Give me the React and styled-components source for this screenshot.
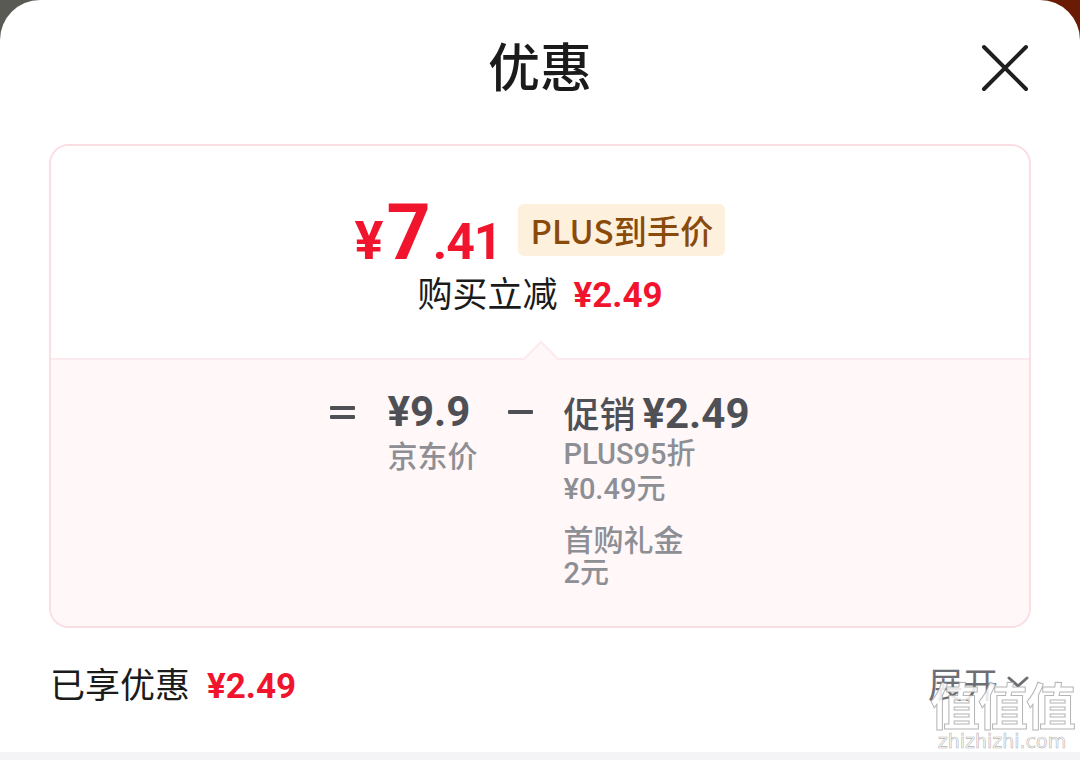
import React from "react";
import styled, { createGlobalStyle } from "styled-components";

const GlobalStyle = createGlobalStyle`
  html, body {
    margin: 0;
    padding: 0;
    height: 100%;
  }
  body {
    background: linear-gradient(90deg, #5a5a55 0%, #5a5a55 50%, #6a1b05 50%, #6a1b05 100%);
    font-family: "Noto Sans CJK SC", "Noto Sans", sans-serif;
  }
`;

const cjk = `"Noto Sans CJK SC", "Noto Sans", sans-serif`;
const num = `Roboto, "Noto Sans CJK SC", sans-serif`;

const Sheet = styled.div`
  position: relative;
  width: 1080px;
  height: 760px;
  background: #fff;
  border-radius: 40px 40px 0 0;
  display: flex;
  flex-direction: column;
  overflow: hidden;
`;

const Header = styled.div`
  height: 144px;
  display: grid;
  grid-template-columns: 1fr auto 1fr;
  align-items: start;
`;

const Title = styled.h1`
  grid-column: 2;
  margin: 30px 0 0;
  font-family: ${cjk};
  font-size: 52px;
  font-weight: 500;
  line-height: 70px;
  color: #1b1b1b;
`;

const CloseButton = styled.button`
  grid-column: 3;
  justify-self: end;
  margin: 44px 51px 0 0;
  width: 48px;
  height: 48px;
  padding: 0;
  border: none;
  background: none;
  cursor: pointer;
`;

const Card = styled.div`
  margin: 0 49px;
  height: 484px;
  box-sizing: border-box;
  border: 2px solid #fbdde4;
  border-radius: 20px;
  overflow: hidden;
  display: flex;
  flex-direction: column;
`;

const CardTop = styled.div`
  height: 212px;
  flex-shrink: 0;
  display: flex;
  flex-direction: column;
  align-items: center;
  background: #fff;
`;

const PriceRow = styled.div`
  display: flex;
  align-items: center;
  gap: 16px;
  margin-top: 52px;
  height: 64px;
`;

const BigPrice = styled.div`
  display: flex;
  align-items: baseline;
  color: #f0142d;
  font-family: ${num};
  font-weight: 700;
  line-height: 1;
  transform: translateY(3px);
`;

const Part = styled.span`
  font-size: ${(p) => p.$size}px;
  letter-spacing: ${(p) => p.$track || 0}px;
  margin-right: ${(p) => p.$after || 0}px;
`;

const Badge = styled.span`
  display: inline-flex;
  align-items: center;
  height: 52px;
  padding: 0 12px 0 13px;
  border-radius: 6px;
  background: #fdf0dd;
  color: #8a4a0a;
  font-family: ${cjk};
  font-size: 33px;
  font-weight: 500;
  letter-spacing: 0.2px;
`;

const SubLine = styled.div`
  margin-top: 8px;
  display: flex;
  align-items: baseline;
  gap: 16px;
  font-family: ${cjk};
  font-size: 35px;
  color: #1b1b1b;
  line-height: 44px;
`;

const Red = styled.span`
  color: #f0142d;
  font-family: ${num};
  font-weight: 700;
  font-size: ${(p) => p.$size || 32}px;
`;

const CardBottom = styled.div`
  position: relative;
  flex: 1;
  background: #fff7f8;
  border-top: 2px solid #fcebee;
  display: flex;
  justify-content: center;
  align-items: flex-start;
  padding: 27px 0 0 0;

  &::before {
    content: "";
    position: absolute;
    top: -14px;
    left: 50%;
    width: 24px;
    height: 24px;
    margin-left: -12px;
    background: #fff7f8;
    border-top: 2px solid #fcebee;
    border-left: 2px solid #fcebee;
    transform: rotate(45deg);
  }
`;

const Sign = styled.div`
  width: 25px;
  height: 50px;
  display: flex;
  align-items: center;
  justify-content: center;
  margin-right: ${(p) => p.$gap}px;
`;

const Bar = styled.span`
  display: block;
  width: 25px;
  height: 4px;
  background: #4e5056;
  border-radius: 1px;
  box-shadow: ${(p) => (p.$double ? "0 9px 0 #4e5056" : "none")};
  transform: ${(p) => (p.$double ? "translateY(-4px)" : "none")};
`;

const Column = styled.div`
  display: flex;
  flex-direction: column;
  margin-right: ${(p) => p.$gap || 0}px;
`;

const Amount = styled.div`
  display: flex;
  align-items: baseline;
  gap: 7px;
  height: 50px;
  line-height: 50px;
  color: #4e5056;
  font-family: ${num};
  font-weight: 700;
  font-size: 42px;
  white-space: nowrap;
`;

const AmountLabel = styled.span`
  font-family: ${cjk};
  font-weight: 500;
  font-size: 36px;
`;

const Note = styled.div`
  font-family: ${(p) => (p.$num ? num : cjk)};
  font-weight: 500;
  font-size: ${(p) => (p.$num ? 29 : 30)}px;
  line-height: 35px;
  color: #8d8f95;
  margin-top: ${(p) => p.$top || 0}px;
  white-space: nowrap;
`;

const Footer = styled.div`
  flex: 1;
  display: flex;
  align-items: center;
  justify-content: space-between;
  padding: 0 50px 16px 50px;
`;

const Saved = styled.div`
  display: flex;
  align-items: baseline;
  gap: 17px;
  font-family: ${cjk};
  font-size: 35px;
  color: #1b1b1b;
`;

const Expand = styled.div`
  display: flex;
  align-items: center;
  gap: 8px;
  font-family: ${cjk};
  font-size: 35px;
  color: #6d6f74;
`;

const BottomStrip = styled.div`
  height: 8px;
  background: #f4f4f6;
`;

const Watermark = styled.div`
  position: absolute;
  right: 6px;
  bottom: 8px;
  display: flex;
  flex-direction: column;
  align-items: center;
  pointer-events: none;
`;

const WaterChars = styled.span`
  font-family: ${cjk};
  font-size: 50px;
  font-weight: 700;
  line-height: 54px;
  letter-spacing: -2px;
  color: rgba(255, 255, 255, 0.85);
  -webkit-text-stroke: 1px rgba(150, 150, 150, 0.7);
`;

const WaterSite = styled.span`
  font-family: "DejaVu Sans", sans-serif;
  font-size: 19px;
  line-height: 22px;
  color: rgba(255, 255, 255, 0.9);
  -webkit-text-stroke: 0.6px rgba(170, 170, 170, 0.9);
`;

const CloseIcon = () => (
  <svg width="48" height="48" viewBox="0 0 48 48">
    <path
      d="M3 3 L45 45 M45 3 L3 45"
      stroke="#1f1f1f"
      strokeWidth="4"
      strokeLinecap="round"
    />
  </svg>
);

const Chevron = () => (
  <svg width="24" height="16" viewBox="0 0 24 16">
    <path
      d="M3 4 L12 12 L21 4"
      stroke="#6d6f74"
      strokeWidth="3"
      fill="none"
      strokeLinecap="round"
      strokeLinejoin="round"
    />
  </svg>
);

const App = () => {
  return (
    <>
      <GlobalStyle />
      <Sheet>
        <Header>
          <Title>优惠</Title>
          <CloseButton aria-label="关闭">
            <CloseIcon />
          </CloseButton>
        </Header>

        <Card>
          <CardTop>
            <PriceRow>
              <BigPrice>
                <Part $size={54} $after={3}>¥</Part>
                <Part $size={77} $after={2}>7</Part>
                <Part $size={50} $track={-1}>.41</Part>
              </BigPrice>
              <Badge>PLUS到手价</Badge>
            </PriceRow>
            <SubLine>
              <span>购买立减</span>
              <Red $size={35}>¥2.49</Red>
            </SubLine>
          </CardTop>

          <CardBottom>
            <Sign $gap={32}>
              <Bar $double />
            </Sign>
            <Column $gap={31}>
              <Amount>¥9.9</Amount>
              <Note>京东价</Note>
            </Column>
            <Sign $gap={30}>
              <Bar />
            </Sign>
            <Column>
              <Amount>
                <AmountLabel>促销</AmountLabel>¥2.49
              </Amount>
              <Note $num>PLUS95折</Note>
              <Note $num>¥0.49元</Note>
              <Note $top={14}>首购礼金</Note>
              <Note $num>2元</Note>
            </Column>
          </CardBottom>
        </Card>

        <Footer>
          <Saved>
            <span>已享优惠</span>
            <Red $size={35}>¥2.49</Red>
          </Saved>
          <Expand>
            展开
            <Chevron />
          </Expand>
        </Footer>
        <BottomStrip />

        <Watermark>
          <WaterChars>值值值</WaterChars>
          <WaterSite>zhizhizhi.com</WaterSite>
        </Watermark>
      </Sheet>
    </>
  );
};

export default App;
